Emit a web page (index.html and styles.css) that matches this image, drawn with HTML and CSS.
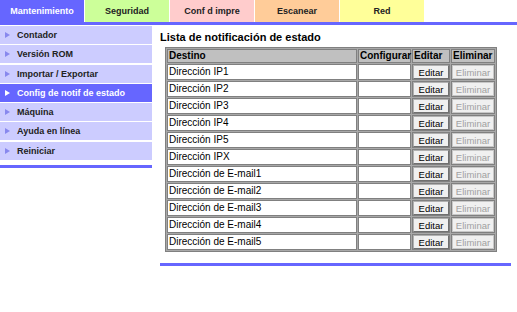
FILE: index.html
```html
<!DOCTYPE html>
<html lang="es">
<head>
    <meta charset="UTF-8">
    <meta name="viewport" content="width=device-width, initial-scale=1.0">
    <title>Config de notif de estado</title>
    <link rel="stylesheet" href="styles.css">
</head>
<body>
    <div class="tabs">
        <div class="tab tab-maint">Mantenimiento</div>
        <div class="tab tab-sec">Seguridad</div>
        <div class="tab tab-print">Conf d impre</div>
        <div class="tab tab-scan">Escanear</div>
        <div class="tab tab-net">Red</div>
    </div>

    <div class="layout">
        <div class="side">
            <ul class="side-menu">
                <li>Contador</li>
                <li>Versión ROM</li>
                <li>Importar / Exportar</li>
                <li class="active">Config de notif de estado</li>
                <li>Máquina</li>
                <li>Ayuda en línea</li>
                <li>Reiniciar</li>
            </ul>
            <div class="side-bar"></div>
        </div>

        <div class="content">
            <h2>Lista de notificación de estado</h2>
            <table class="notif-table">
                <thead>
                    <tr>
                        <th class="col-dest">Destino</th>
                        <th class="col-conf">Configurar</th>
                        <th class="col-edit">Editar</th>
                        <th class="col-del">Eliminar</th>
                    </tr>
                </thead>
                <tbody id="notif-rows">
                    <!-- rows are filled in below -->
                </tbody>
            </table>
            <div class="content-bar"></div>
        </div>
    </div>

    <script>
        const destinations = [
            'Dirección IP1', 'Dirección IP2', 'Dirección IP3', 'Dirección IP4',
            'Dirección IP5', 'Dirección IPX', 'Dirección de E-mail1',
            'Dirección de E-mail2', 'Dirección de E-mail3',
            'Dirección de E-mail4', 'Dirección de E-mail5'
        ];
        const rows = document.getElementById('notif-rows');
        destinations.forEach(function(name) {
            const tr = document.createElement('tr');
            tr.innerHTML = `
                <td>${name}</td>
                <td></td>
                <td class="btn-cell"><button class="btn">Editar</button></td>
                <td class="btn-cell"><button class="btn" disabled>Eliminar</button></td>
            `;
            rows.appendChild(tr);
        });
    </script>
</body>
</html>
```

FILE: styles.css
```css
body {
    font-family: 'Liberation Sans', Arial, sans-serif;
    color: #000;
    background-color: #fff;
    margin: 0;
}
.tabs {
    display: flex;
    height: 22px;
    border-bottom: 3px solid #6666ff;
}
.tab {
    width: 84px;
    margin-right: 1px;
    text-align: center;
    line-height: 22px;
    font-size: 9px;
    font-weight: bold;
    color: #222;
}
.tab-maint {
    background-color: #6666ff;
    color: #fff;
}
.tab-sec {
    background-color: #ccff99;
}
.tab-print {
    background-color: #ffcccc;
}
.tab-scan {
    background-color: #ffcc99;
}
.tab-net {
    background-color: #ffff99;
}
.layout {
    display: flex;
}
.side {
    width: 152px;
    padding-top: 1px;
}
.side-menu {
    list-style: none;
    margin: 0;
    padding: 0;
}
.side-menu li {
    position: relative;
    height: 18px;
    line-height: 18px;
    margin-bottom: 1.3px;
    padding-left: 17px;
    background-color: #ccccff;
    font-size: 9px;
    font-weight: bold;
    color: #222;
}
.side-menu li::before {
    content: '';
    position: absolute;
    left: 5px;
    top: 6px;
    border-left: 5px solid #8888ee;
    border-top: 3px solid transparent;
    border-bottom: 3px solid transparent;
}
.side-menu li.active {
    background-color: #6666ff;
    color: #fff;
}
.side-menu li.active::before {
    border-left-color: #fff;
}
.side-bar {
    height: 3px;
    margin-top: 5px;
    background-color: #6666ff;
}
.content {
    flex: 1;
    margin-left: 8px;
    margin-right: 6px;
    padding-top: 4px;
}
.content h2 {
    margin: 0 0 2px 0;
    font-size: 11px;
    line-height: 16px;
    font-weight: bold;
}
.notif-table {
    margin-left: 5px;
    width: 332px;
    table-layout: fixed;
    border: 1px solid #808080;
    border-spacing: 1px;
    background-color: #a8a8a8;
    font-size: 10px;
}
.notif-table th,
.notif-table td {
    box-sizing: border-box;
    border: 1px solid #808080;
    padding: 0 1px;
    text-align: left;
    line-height: 12px;
    white-space: nowrap;
}
.notif-table thead tr {
    height: 14px;
}
.notif-table tbody tr {
    height: 16px;
}
.notif-table th {
    background-color: #c0c0c0;
}
.notif-table td {
    background-color: #fff;
}
.col-dest {
    width: 190px;
}
.col-conf {
    width: 53px;
}
.col-edit {
    width: 38px;
}
.col-del {
    width: 44px;
}
.notif-table td.btn-cell {
    padding: 0;
    text-align: center;
}
.btn {
    display: block;
    font-family: 'Liberation Sans', Arial, sans-serif;
    font-size: 9.5px;
    line-height: 11px;
    height: 14px;
    width: 100%;
    padding: 0;
    background-color: #f0f0f0;
    border: 1px solid #b0b0b0;
    border-right-color: #707070;
    border-bottom-color: #707070;
    color: #000;
}
.btn:disabled {
    color: #a0a0a0;
    border-color: #c8c8c8;
}
.content-bar {
    height: 3px;
    margin-top: 11px;
    background-color: #6666ff;
}
```
